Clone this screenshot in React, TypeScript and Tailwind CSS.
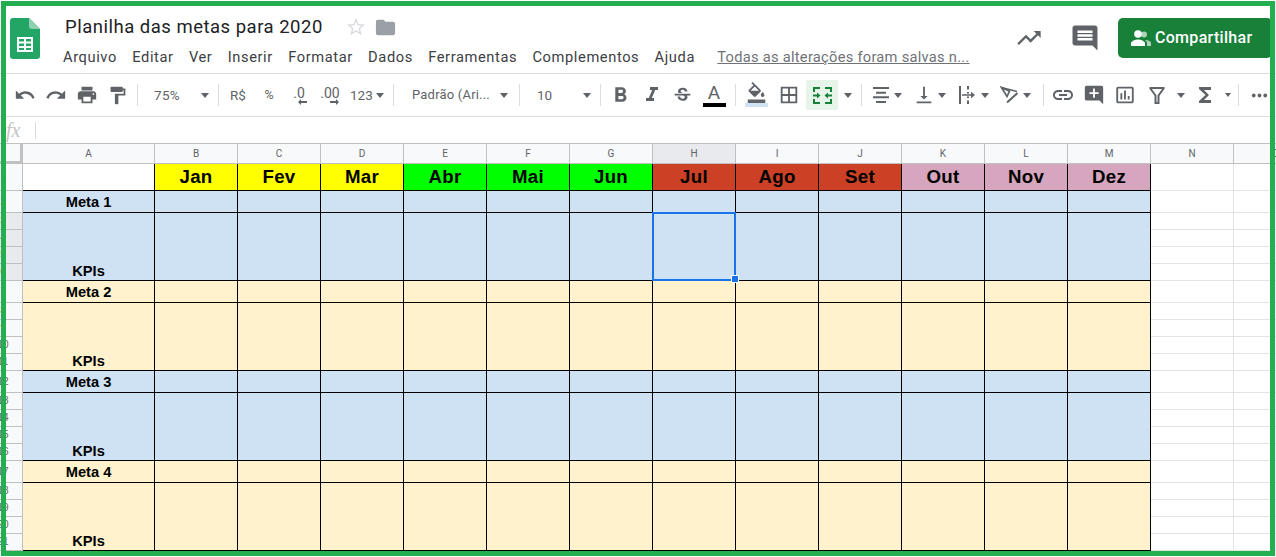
import type { ReactNode } from "react";
import {
  MdUndo,
  MdRedo,
  MdPrint,
  MdFormatPaint,
  MdFormatBold,
  MdFormatItalic,
  MdStrikethroughS,
  MdFormatColorFill,
  MdBorderAll,
  MdVerticalAlignBottom,
  MdInsertLink,
  MdAddComment,
  MdInsertChartOutlined,
  MdFunctions,
  MdMoreHoriz,
  MdTrendingUp,
  MdComment,
  MdStarBorder,
  MdFolder,
} from "react-icons/md";

const menus = ["Arquivo", "Editar", "Ver", "Inserir", "Formatar", "Dados", "Ferramentas", "Complementos", "Ajuda"];

const meses = [
  { nome: "Jan", cor: "bg-[#ffff00]" },
  { nome: "Fev", cor: "bg-[#ffff00]" },
  { nome: "Mar", cor: "bg-[#ffff00]" },
  { nome: "Abr", cor: "bg-[#00ff00]" },
  { nome: "Mai", cor: "bg-[#00ff00]" },
  { nome: "Jun", cor: "bg-[#00ff00]" },
  { nome: "Jul", cor: "bg-[#cc4125]" },
  { nome: "Ago", cor: "bg-[#cc4125]" },
  { nome: "Set", cor: "bg-[#cc4125]" },
  { nome: "Out", cor: "bg-[#d5a6bd]" },
  { nome: "Nov", cor: "bg-[#d5a6bd]" },
  { nome: "Dez", cor: "bg-[#d5a6bd]" },
];

const colunas = ["A", "B", "C", "D", "E", "F", "G", "H", "I", "J", "K", "L", "M", "N", "O"];

const metas = [
  { nome: "Meta 1", cor: "bg-[#cfe2f3]", linha: 2 },
  { nome: "Meta 2", cor: "bg-[#fff2cc]", linha: 7 },
  { nome: "Meta 3", cor: "bg-[#cfe2f3]", linha: 12 },
  { nome: "Meta 4", cor: "bg-[#fff2cc]", linha: 17 },
];

function Caret() {
  return <span className="w-0 h-0 shrink-0 border-x-[4.5px] border-t-[5px] border-x-transparent border-t-[#5f6368]" />;
}

function Sep({ className = "w-[8px]" }: { className?: string }) {
  return (
    <div className={`${className} flex justify-center shrink-0`}>
      <div className="w-px h-[22px] bg-[#dadce0]" />
    </div>
  );
}

function Btn({ className, children }: { className: string; children: ReactNode }) {
  const centro = className.includes("justify-") ? "" : "justify-center";
  return <div className={`${className} ${centro} h-[30px] flex items-center shrink-0`}>{children}</div>;
}

function LogoSheets() {
  return (
    <svg width="30" height="41" viewBox="0 0 30 41">
      <path d="M3 0h16l11 11v27a3 3 0 0 1-3 3H3a3 3 0 0 1-3-3V3a3 3 0 0 1 3-3z" fill="#23a566" />
      <path d="M19 0l11 11h-8a3 3 0 0 1-3-3z" fill="#8ed1b1" />
      <path d="M7 19h16v15H7z" fill="#ffffff" />
      <path d="M9 21v2.500h5V21zm7 0v2.500h5V21zm-7 4.500v2.500h5v-2.500zm7 0v2.500h5v-2.500zm-7 4.500V32h5v-2zm7 0V32h5v-2z" fill="#23a566" />
    </svg>
  );
}

function PessoasIcon() {
  return (
    <svg width="20" height="16" viewBox="0 0 20 16" fill="#ffffff">
      <circle cx="13" cy="4.500" r="3" opacity="0.65" />
      <path d="M14 10c3 .2 6 1.300 6 3v3h-4v-3c0-1.200-.8-2.200-2-3z" opacity="0.65" />
      <circle cx="7" cy="4" r="3.800" />
      <path d="M0 16v-2.500C0 11 4.500 9.500 7 9.500s7 1.500 7 4V16z" />
    </svg>
  );
}

function MesclarIcon() {
  return (
    <svg width="19" height="17" viewBox="0 0 19 17" fill="#188038">
      <path d="M0 0h7v2H2v3H0zM12 0h7v5h-2V2h-5zM0 12h2v3h5v2H0zM17 12h2v5h-7v-2h5z" />
      <path d="M0 7.500h4V5.500l3.500 3-3.500 3v-2H0zM19 7.500h-4V5.500l-3.500 3 3.500 3v-2h4z" />
    </svg>
  );
}

function AlinharIcon() {
  return (
    <svg width="16" height="16" viewBox="0 0 16 16" fill="#5f6368">
      <path d="M0 0h16v2H0zM3 4.700h10v2H3zM0 9.300h16v2H0zM3 14h10v2H3z" />
    </svg>
  );
}

function QuebraIcon() {
  return (
    <svg width="16" height="18" viewBox="0 0 16 18" fill="#5f6368">
      <path d="M0 0h2v18H0zM8 0h2v3.500H8zM8 14.500h2V18H8zM8 6h2v1.500H8zM8 10.500h2V12H8z" />
      <path d="M3 8.200h9V5.800L16 9l-4 3.200V9.800H3z" />
    </svg>
  );
}

function GirarIcon() {
  return (
    <svg width="19" height="18" viewBox="0 0 19 18" fill="none" stroke="#5f6368" strokeWidth="1.700">
      <path d="M1.500 1.500l5.500 9 2.500-5.300z" />
      <path d="M1.500 1.500L17 5.500" />
      <path d="M7 16.500L17.500 7" strokeWidth="2" />
    </svg>
  );
}

function FiltroIcon() {
  return (
    <svg width="18" height="17" viewBox="0 0 18 17" fill="none" stroke="#5f6368" strokeWidth="2">
      <path d="M1.500 1h15M2 1l5.500 7.500V16h3V8.500L16 1" />
    </svg>
  );
}

function SetaEsq() {
  return (
    <svg width="9" height="6" viewBox="0 0 9 6" fill="#5f6368">
      <path d="M0 3l3-3v2h6v2H3v2z" />
    </svg>
  );
}

function SetaDir() {
  return (
    <svg width="9" height="6" viewBox="0 0 9 6" fill="#5f6368">
      <path d="M9 3L6 0v2H0v2h6v2z" />
    </svg>
  );
}

function Topo() {
  return (
    <div className="h-[74px] border-b border-[#dadce0] flex items-start">
      <div className="ml-[10px] mt-[18px] shrink-0">
        <LogoSheets />
      </div>
      <div className="ml-[23px] flex-1 min-w-0">
        <div className="mt-[15px] h-[24px] flex items-center pl-[2px]">
          <span className="text-[18.5px] leading-[24px] tracking-[0.5px] text-[#202124] w-[283px] whitespace-nowrap">Planilha das metas para 2020</span>
          <MdStarBorder size={22} className="text-[#dadce0] -ml-[3px]" />
          <MdFolder size={23} className="text-[#9aa0a6] ml-[7px]" />
        </div>
        <div className="mt-[8px] flex items-center text-[14.67px] leading-[20px] tracking-[0.6px] text-[#3c4043] whitespace-nowrap">
          {menus.map((m) => (
            <span key={m} className="mr-[15.3px]">
              {m}
            </span>
          ))}
          <span className="ml-[7px] underline text-[#6f7377] tracking-[0.27px]">Todas as alterações foram salvas n...</span>
        </div>
      </div>
      <div className="flex items-center mt-[18px] shrink-0 pr-[4px]">
        <MdTrendingUp size={28} className="text-[#5f6368]" />
        <MdComment size={30} className="text-[#5f6368] ml-[27px]" />
        <div className="ml-[18px] w-[154px] h-[40px] bg-[#188038] rounded-[5px] flex items-center pl-[13px] text-white text-[16px] font-medium tracking-[0.3px]">
          <PessoasIcon />
          <span className="ml-[4px]">Compartilhar</span>
        </div>
      </div>
    </div>
  );
}

function BarraFerramentas() {
  return (
    <div className="h-[43px] border-b border-[#dadce0] flex items-center pl-[9px] text-[#5f6368] text-[13.5px] whitespace-nowrap">
      <Btn className="w-[31px]"><MdUndo size={22} /></Btn>
      <Btn className="w-[31px]"><MdRedo size={22} /></Btn>
      <Btn className="w-[31px]"><MdPrint size={22} /></Btn>
      <Btn className="w-[31px]"><MdFormatPaint size={21} /></Btn>
      <Sep />
      <Btn className="w-[73px] justify-between pl-[13px] pr-[5px]"><span className="tracking-[0.3px]">75%</span><Caret /></Btn>
      <Sep />
      <Btn className="w-[32px]"><span>R$</span></Btn>
      <Btn className="w-[30px]"><span className="text-[12.5px]">%</span></Btn>
      <Btn className="w-[30px]">
        <div className="flex flex-col items-center leading-[11px] mt-[3px] text-[14px]"><span>.0</span><div className="-mr-[7px]"><SetaEsq /></div></div>
      </Btn>
      <Btn className="w-[32px]">
        <div className="flex flex-col items-center leading-[11px] mt-[3px] text-[14px]"><span>.00</span><div className="-mr-[9px]"><SetaDir /></div></div>
      </Btn>
      <Btn className="w-[43px] justify-start pl-[4px] gap-[3px]"><span>123</span><Caret /></Btn>
      <Sep />
      <Btn className="w-[118px] justify-between pl-[15px] pr-[7px]"><span className="text-[13px] tracking-[0.2px]">Padrão (Ari...</span><Caret /></Btn>
      <Sep />
      <Btn className="w-[73px] justify-between pl-[14px] pr-[5px]"><span>10</span><Caret /></Btn>
      <Sep />
      <Btn className="w-[32px]"><MdFormatBold size={25} /></Btn>
      <Btn className="w-[31px]"><MdFormatItalic size={24} /></Btn>
      <Btn className="w-[31px]"><MdStrikethroughS size={21} /></Btn>
      <Btn className="w-[32px]">
        <div className="flex flex-col items-center">
          <span className="text-[19px] leading-[19px] font-normal">A</span>
          <div className="w-[23px] h-[4px] mt-[1px] bg-black" />
        </div>
      </Btn>
      <Sep className="w-[10px]" />
      <Btn className="w-[32px]">
        <div className="flex flex-col items-center">
          <MdFormatColorFill size={21} className="-mt-[2px]" />
          <div className="w-[23px] h-[4px] bg-[#cfe2f3]" />
        </div>
      </Btn>
      <Btn className="w-[34px]"><MdBorderAll size={22} /></Btn>
      <Btn className="w-[32px] bg-[#e6f4ea] rounded-[2px]"><MesclarIcon /></Btn>
      <Btn className="w-[19px]"><Caret /></Btn>
      <Sep />
      <Btn className="w-[46px] justify-start pl-[8px] gap-[5px]"><AlinharIcon /><Caret /></Btn>
      <Btn className="w-[42px] justify-start pl-[2px] gap-[3px]"><MdVerticalAlignBottom size={22} /><Caret /></Btn>
      <Btn className="w-[43px] justify-start pl-[6px] gap-[6px]"><QuebraIcon /><Caret /></Btn>
      <Btn className="w-[43px] justify-start pl-[4px] gap-[4px]"><GirarIcon /><Caret /></Btn>
      <Sep />
      <Btn className="w-[32px]"><MdInsertLink size={24} /></Btn>
      <Btn className="w-[30px]"><MdAddComment size={22} /></Btn>
      <Btn className="w-[32px]"><MdInsertChartOutlined size={22} /></Btn>
      <Btn className="w-[32px]"><FiltroIcon /></Btn>
      <Btn className="w-[16px]"><Caret /></Btn>
      <Btn className="w-[32px]"><MdFunctions size={24} /></Btn>
      <Btn className="w-[13px]">
        <span className="w-0 h-0 border-x-[3px] border-t-[4px] border-x-transparent border-t-[#5f6368]" />
      </Btn>
      <Sep />
      <Btn className="w-[34px]"><MdMoreHoriz size={23} /></Btn>
    </div>
  );
}

function BarraFormula() {
  return (
    <div className="h-[26px] flex items-center">
      <span className="ml-[6px] w-[29px] text-[20px] leading-none italic text-[#c4c4c4] font-['Liberation_Serif',serif]">fx</span>
      <div className="w-px h-[17px] bg-[#dadce0]" />
    </div>
  );
}

function NumLinha({ n, ativo = false }: { n: number; ativo?: boolean }) {
  return (
    <div className={`border-b border-r border-[#c0c0c0] flex items-center ${ativo ? "bg-[#e8eaed]" : "bg-[#f8f9fa]"}`}>
      <div className="w-[6px] flex justify-center text-[10px] text-[#5f6368] leading-none">
        <span className="shrink-0">{n}</span>
      </div>
    </div>
  );
}

function Vazia() {
  return <div className="border-r border-b border-[#e2e3e3]" />;
}

function Planilha() {
  const alturas = "grid-rows-[21px_27px_22px_17px_17px_17px_17px_22px_17px_17px_17px_17px_22px_17px_17px_17px_17px_22px_17px_17px_17px_17px]";

  return (
    <div className={`grid grid-cols-[23px_132px_repeat(14,83px)] ${alturas} font-['Liberation_Sans',Arial,sans-serif] text-black`}>
      {/* cabecalho das colunas */}
      <div className="border-t border-b-[3px] border-r-[3px] border-[#c0c0c0] bg-[#f8f9fa]" />
      {colunas.map((c) => (
        <div
          key={c}
          className={`border-t border-b border-r border-[#c0c0c0] flex items-center justify-center text-[10px] text-[#5f6368] font-['Roboto',sans-serif] ${c === "H" ? "bg-[#e8eaed]" : "bg-[#f8f9fa]"}`}
        >
          {c}
        </div>
      ))}

      {/* linha dos meses */}
      <NumLinha n={1} />
      <div className="bg-white border-r border-b border-black" />
      {meses.map((m) => (
        <div key={m.nome} className={`${m.cor} border-r border-b border-black flex items-center justify-center font-bold text-[18.67px] leading-none tracking-[0.3px]`}>
          {m.nome}
        </div>
      ))}
      <Vazia />
      <Vazia />

      {metas.map((meta) => (
        <MetaLinhas key={meta.nome} nome={meta.nome} cor={meta.cor} linha={meta.linha} />
      ))}
    </div>
  );
}

function MetaLinhas({ nome, cor, linha }: { nome: string; cor: string; linha: number }) {
  const meio = meses.map((m) => m.nome);
  const selecionada = linha === 2;

  return (
    <>
      <NumLinha n={linha} />
      <div className={`${cor} border-r border-b border-black flex items-center justify-center font-bold text-[14.67px] leading-none pt-[2px]`}>{nome}</div>
      {meio.map((m) => (
        <div key={m} className={`${cor} border-r border-b border-black`} />
      ))}
      <Vazia />
      <Vazia />

      <NumLinha n={linha + 1} ativo={selecionada} />
      <div className={`${cor} row-span-4 border-r border-b border-black flex items-end justify-center font-bold text-[14.67px] leading-[17px]`}>KPIs</div>
      {meio.map((m) => (
        <div key={m} className={`${cor} row-span-4 border-r border-b border-black relative`}>
          {selecionada && m === "Jul" && (
            <>
              <div className="absolute -left-px -top-px right-[-1px] bottom-[-1px] border-2 border-[#1a73e8]" />
              <div className="absolute -right-[4px] -bottom-[3px] w-[8px] h-[8px] bg-[#1a73e8] border border-white box-border z-10" />
            </>
          )}
        </div>
      ))}
      <Vazia />
      <Vazia />
      {[2, 3, 4].map((i) => (
        <MetaResto key={i} n={linha + i} ativo={selecionada} />
      ))}
    </>
  );
}

function MetaResto({ n, ativo }: { n: number; ativo: boolean }) {
  return (
    <>
      <NumLinha n={n} ativo={ativo} />
      <Vazia />
      <Vazia />
    </>
  );
}

export default function App() {
  return (
    <div className="relative w-[1276px] h-[557px] overflow-hidden bg-white font-['Roboto',sans-serif]">
      <Topo />
      <BarraFerramentas />
      <BarraFormula />
      <Planilha />
      {/* moldura verde por cima da captura */}
      <div className="absolute left-px top-px w-[1274px] h-[555px] border-[5px] border-[#23ae4f] pointer-events-none z-20" />
    </div>
  );
}
